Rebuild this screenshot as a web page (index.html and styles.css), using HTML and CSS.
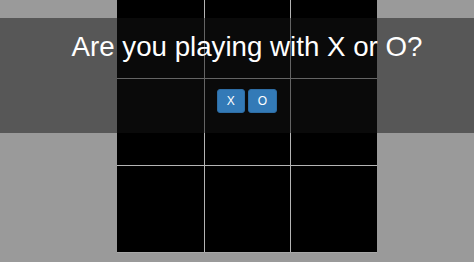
FILE: index.html
```html
<!DOCTYPE html>
<html>
<head>
<meta charset="utf-8">
<link rel="stylesheet" href="styles.css">
</head>
<body>
<div class="page">
  <div class="board">
    <div class="cell"></div><div class="cell"></div><div class="cell"></div>
    <div class="cell"></div><div class="cell"></div><div class="cell"></div>
    <div class="cell"></div><div class="cell"></div><div class="cell"></div>
  </div>
</div>
<div class="overlay">
  <div class="overlay-inner">
    <h1 class="question">Are you playing with X or O?</h1>
    <div class="choices">
      <button class="btn">X</button>
      <button class="btn">O</button>
    </div>
  </div>
</div>
</body>
</html>
```
FILE: styles.css
```css
html, body {
  margin: 0;
  padding: 0;
  height: 100%;
  overflow: hidden;
}
body {
  background: #9a9a9a;
  font-family: "Liberation Sans", Arial, sans-serif;
}
.page {
  padding-left: 20px;
}
.board {
  width: 260px;
  margin: -8px auto 0;
  display: grid;
  grid-template-columns: 87px 85px 86px;
  grid-template-rows: 86px 86px 86px;
  gap: 1px;
  background: #b4b4b4;
  border-bottom: 1px solid #a8a8a8;
}
.cell {
  background: #000;
}
.overlay {
  position: absolute;
  left: 0;
  right: 0;
  top: 18px;
  height: 115px;
  background: rgba(20, 20, 20, 0.5);
}
.overlay-inner {
  padding: 13px 0 0 20px;
  text-align: center;
}
.question {
  margin: 0;
  font-size: 27.7px;
  line-height: 32px;
  font-weight: normal;
  color: #fff;
}
.choices {
  margin-top: 26px;
  display: flex;
  justify-content: center;
  gap: 3px;
}
.btn {
  height: 24px;
  padding: 0 9px;
  font-family: "Liberation Sans", Arial, sans-serif;
  font-size: 12px;
  color: #fff;
  background: #337ab7;
  border: 1px solid #2e6da4;
  border-radius: 3px;
}
```
